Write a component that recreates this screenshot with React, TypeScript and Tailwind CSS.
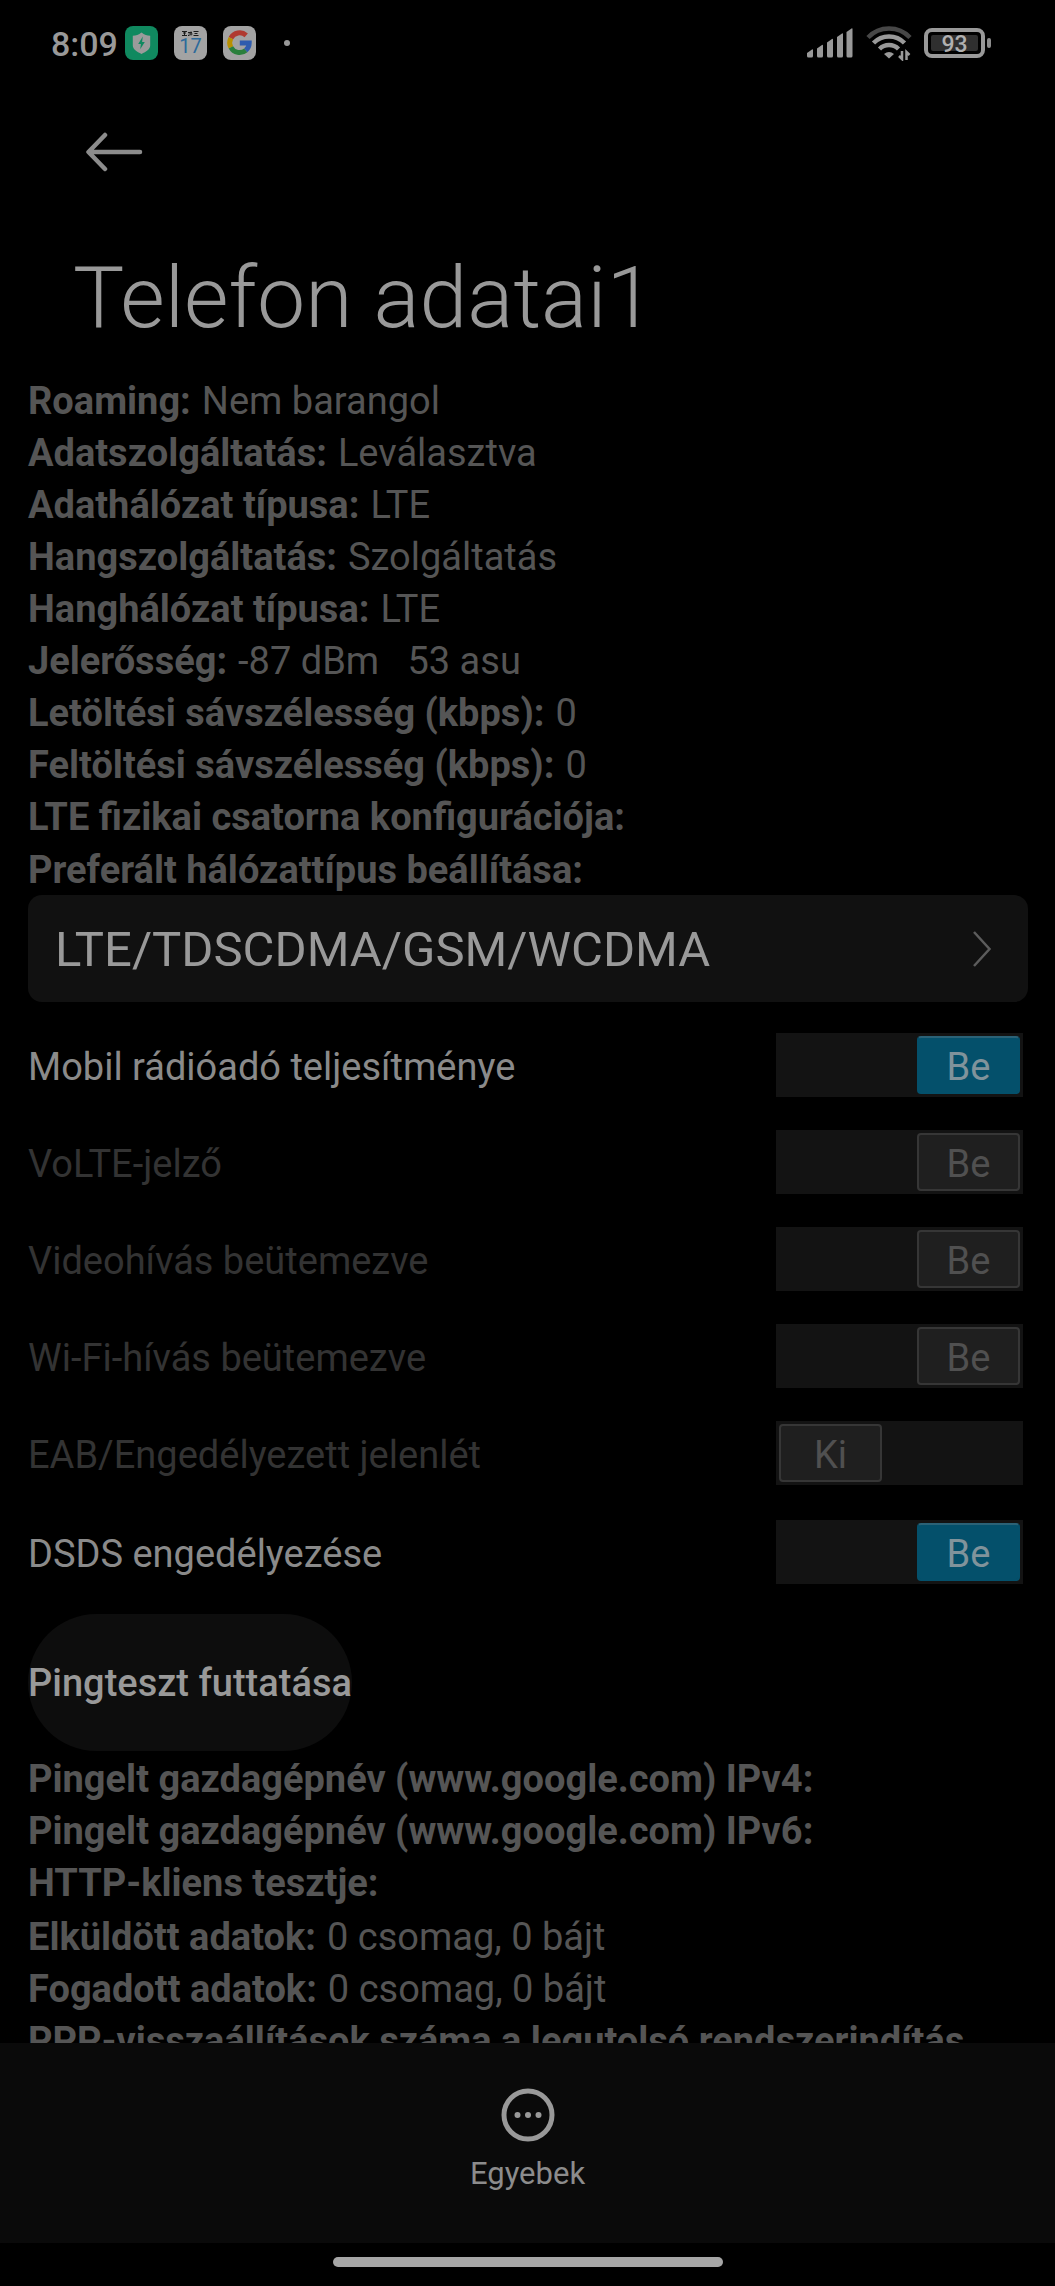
import { useState } from "react";

type Info = { label: string; value?: string };

const networkInfo: Info[] = [
  { label: "Roaming:", value: "Nem barangol" },
  { label: "Adatszolgáltatás:", value: "Leválasztva" },
  { label: "Adathálózat típusa:", value: "LTE" },
  { label: "Hangszolgáltatás:", value: "Szolgáltatás" },
  { label: "Hanghálózat típusa:", value: "LTE" },
  { label: "Jelerősség:", value: "-87 dBm   53 asu" },
  { label: "Letöltési sávszélesség (kbps):", value: "0" },
  { label: "Feltöltési sávszélesség (kbps):", value: "0" },
  { label: "LTE fizikai csatorna konfigurációja:" },
];

const pingInfo: Info[] = [
  { label: "Pingelt gazdagépnév (www.google.com) IPv4:" },
  { label: "Pingelt gazdagépnév (www.google.com) IPv6:" },
  { label: "HTTP-kliens tesztje:" },
];

const trafficInfo: Info[] = [
  { label: "Elküldött adatok:", value: "0 csomag, 0 bájt" },
  { label: "Fogadott adatok:", value: "0 csomag, 0 bájt" },
  { label: "PPP-visszaállítások száma a legutolsó rendszerindítás" },
];

function InfoList({ items }: { items: Info[] }) {
  return (
    <dl className="text-[38px] leading-[52px] text-[#555555]">
      {items.map((item) => (
        <div key={item.label} className="flex gap-[11px] whitespace-pre-wrap">
          <dt className="font-bold">{item.label}</dt>
          {item.value && <dd>{item.value}</dd>}
        </div>
      ))}
    </dl>
  );
}

function Toggle({ label, initial, disabled = false }: { label: string; initial: boolean; disabled?: boolean }) {
  const [on, setOn] = useState(initial);
  const thumb = disabled
    ? "border-[#363636] bg-[#1f1f1f] text-[#505050]"
    : on
      ? "border-[#04506b] border-t-[#2b6277] bg-[#04506b] text-[#80939b]"
      : "border-[#363636] bg-[#1f1f1f] text-[#8a8a8a]";
  return (
    <label className="flex h-16 items-center justify-between">
      <span className={disabled ? "pt-1 text-[38px] text-[#333333]" : "pt-1 text-[38px] text-[#8a8a8a]"}>{label}</span>
      <span className={"flex h-16 w-[247px] bg-[#131313] p-[3px] " + (on ? "justify-end" : "justify-start")}>
        <input
          type="checkbox"
          role="switch"
          className="sr-only"
          checked={on}
          disabled={disabled}
          onChange={(e) => setOn(e.target.checked)}
        />
        <span className={"flex w-[103px] items-center justify-center rounded-[4px] border-2 pt-1 text-[38px] leading-none " + thumb}>
          {on ? "Be" : "Ki"}
        </span>
      </span>
    </label>
  );
}

function ShieldIcon() {
  return (
    <svg width="33" height="34" viewBox="0 0 33 34" aria-hidden="true">
      <rect width="33" height="34" rx="8" fill="#10895f" />
      <path d="M16.5 6.5c2.8 2.2 5.600 3.100 8.700 3.300v9.700c0 3.600-3.900 6.200-8.700 8.400-4.800-2.200-8.700-4.800-8.700-8.400V9.800c3.100-.2 5.900-1.100 8.700-3.300z" fill="#9b9b9b" />
      <path d="M17.8 10.5l-4.600 7.400h2.700l-.7 5.300 4.600-7.300h-2.700z" fill="#10895f" />
    </svg>
  );
}

function CalendarIcon() {
  return (
    <span className="flex h-[34px] w-[33px] flex-col items-center rounded-[8px] bg-[#a3a3a3] pt-[5px]">
      <svg width="17" height="5" viewBox="0 0 17 5" aria-hidden="true">
        <path d="M0 .5h5M1 2h3M0 4.500h5M2.500 1v3M6 1.500h4M6.500 3h4M6 4.500h1.500M9 .5v4M11.500.5h5M12.500 2.500h3M11.500 4.500h5" stroke="#1c1c1c" strokeWidth="1" fill="none" />
      </svg>
      <span className="text-[20px] leading-[20px] text-[#2c6a9b]">17</span>
    </span>
  );
}

function GoogleIcon() {
  return (
    <svg width="33" height="34" viewBox="0 0 33 34" aria-hidden="true">
      <rect width="33" height="34" rx="8" fill="#a3a3a3" />
      <g fill="none" strokeWidth="5">
        <path d="M23.200 9.300A9.800 9.800 0 0 0 7.900 12.200" stroke="#b03a30" />
        <path d="M7.900 12.200a9.800 9.800 0 0 0 0 9.200" stroke="#b89000" />
        <path d="M7.900 21.400a9.800 9.800 0 0 0 14.900 2.900" stroke="#2a7f3c" />
        <path d="M22.800 24.300a9.800 9.800 0 0 0 3.400-7.300H16.800" stroke="#2f5cae" />
      </g>
    </svg>
  );
}

function SignalIcon() {
  return (
    <svg width="48" height="32" viewBox="0 0 48 32" fill="#999999" aria-hidden="true">
      <path d="M1 29v-3l5-3.500q1-.5 1 .5v6q0 1.500-1.500 1.500h-3Q1 30.500 1 29z" />
      <path d="M11 29v-7.500l5-3.500q1-.5 1 .5V29q0 1.500-1.500 1.500h-3Q11 30.500 11 29z" />
      <path d="M21 29V15.500l5-3.500q1-.5 1 .5V29q0 1.500-1.500 1.500h-3Q21 30.500 21 29z" />
      <path d="M31 29V10l5-3.500q1-.5 1 .5v22q0 1.500-1.500 1.500h-3Q31 30.500 31 29z" />
      <path d="M40.500 29V5l5-3.500q1-.5 1 .5v27q0 1.500-1.500 1.500h-3q-1.500 0-1.500-1.500z" />
    </svg>
  );
}

function WifiIcon() {
  return (
    <svg width="46" height="36" viewBox="0 0 46 36" fill="none" strokeWidth="4.500" aria-hidden="true">
      <path d="M2 12.500a29 29 0 0 1 42 0" stroke="#474747" />
      <path d="M7.500 18a21.500 21.500 0 0 1 31 0" stroke="#999999" />
      <path d="M13.500 24a13.500 13.500 0 0 1 19 0" stroke="#999999" />
      <path d="M23 33.500l-5-4.500q5-4 10 0z" fill="#999999" />
      <path d="M36 26v8l-3-3M40.500 35v-8l3 3" stroke="#999999" strokeWidth="2.500" />
    </svg>
  );
}

function Battery() {
  return (
    <span className="flex items-center gap-0.5" aria-label="93%">
      <span className="flex h-[30px] w-[61px] rounded-[8px] border-4 border-[#999999] p-[3px]">
        <span className="flex flex-1 items-center justify-center rounded-[2px] bg-[#2f2f2f] pt-0.5 text-[23px] leading-none font-medium text-[#b0b0b0]">
          93
        </span>
      </span>
      <span className="h-2.5 w-1 rounded-full bg-[#8c8c8c]" />
    </span>
  );
}

export default function App() {
  return (
    <div className="flex h-screen flex-col overflow-hidden bg-black font-['Roboto',sans-serif] text-[#999999]">
      <div className="flex h-[86px] shrink-0 items-center justify-between pr-16 pl-[51px]">
        <div className="flex items-center gap-4">
          <div className="flex items-center gap-[7px]">
            <time className="pt-0.5 text-[34px] leading-none font-medium">8:09</time>
            <ShieldIcon />
          </div>
          <CalendarIcon />
          <GoogleIcon />
          <span className="ml-3 h-1.5 w-1.5 rounded-full bg-[#999999]" />
        </div>
        <div className="flex items-center gap-3">
          <SignalIcon />
          <WifiIcon />
          <Battery />
        </div>
      </div>

      <header className="shrink-0 px-[73px]">
        <button type="button" aria-label="Vissza" className="flex h-[132px] w-[84px] items-center pl-3">
          <svg width="58" height="40" viewBox="0 0 58 40" fill="none" stroke="#8c8c8c" strokeWidth="4.500" strokeLinecap="round" strokeLinejoin="round" aria-hidden="true">
            <path d="M20 3L3.500 20 20 37M4 20h51" />
          </svg>
        </button>
        <h1 className="h-[157px] pt-7 text-[86px] leading-[104px] font-light">Telefon adatai1</h1>
      </header>

      <main className="min-h-0 flex-1 overflow-hidden pr-[27px] pl-7">
        <InfoList items={networkInfo} />

        <label htmlFor="network-type" className="mt-0.5 block text-[38px] leading-[50px] font-bold text-[#555555]">
          Preferált hálózattípus beállítása:
        </label>
        <div className="relative">
          <select id="network-type" className="block h-[107px] w-full appearance-none rounded-[14px] bg-[#111111] pt-0.5 pr-24 pl-[27px] text-[49px] text-[#999999]">
            <option>LTE/TDSCDMA/GSM/WCDMA</option>
          </select>
          <svg className="pointer-events-none absolute top-[34px] right-9" width="20" height="40" viewBox="0 0 20 40" fill="none" stroke="#5c5c5c" strokeWidth="2.500" aria-hidden="true">
            <path d="M2 3l15.500 17L2 37" />
          </svg>
        </div>

        <div className="mt-[31px] mr-[5px] flex flex-col gap-[33px]">
          <Toggle label="Mobil rádióadó teljesítménye" initial />
          <Toggle label="VoLTE-jelző" initial disabled />
          <Toggle label="Videohívás beütemezve" initial disabled />
          <Toggle label="Wi-Fi-hívás beütemezve" initial disabled />
          <Toggle label="EAB/Engedélyezett jelenlét" initial={false} disabled />
          <div className="mt-0.5">
            <Toggle label="DSDS engedélyezése" initial />
          </div>
        </div>

        <button type="button" className="mt-[30px] mb-0.5 block h-[137px] rounded-full bg-[#0d0d0d] pt-0.5 text-[38px] font-medium whitespace-nowrap">
          Pingteszt futtatása
        </button>

        <InfoList items={pingInfo} />
        <div className="mt-0.5">
          <InfoList items={trafficInfo} />
        </div>
      </main>

      <footer className="shrink-0">
        <div className="flex h-[200px] justify-center bg-[#0a0a0a]">
          <button type="button" className="flex flex-col items-center gap-3.5 self-start pt-[45px] text-[31px] leading-9 text-[#8c8c8c]">
            <svg width="54" height="54" viewBox="0 0 54 54" fill="#999999" aria-hidden="true">
              <circle cx="27" cy="27" r="24" fill="none" stroke="#999999" strokeWidth="5" />
              <circle cx="16.500" cy="27" r="3" />
              <circle cx="27" cy="27" r="3" />
              <circle cx="37.500" cy="27" r="3" />
            </svg>
            Egyebek
          </button>
        </div>
        <div className="flex h-[43px] justify-center pt-3.5">
          <span className="h-2.5 w-[390px] rounded-full bg-[#a6a6a6]" />
        </div>
      </footer>
    </div>
  );
}
